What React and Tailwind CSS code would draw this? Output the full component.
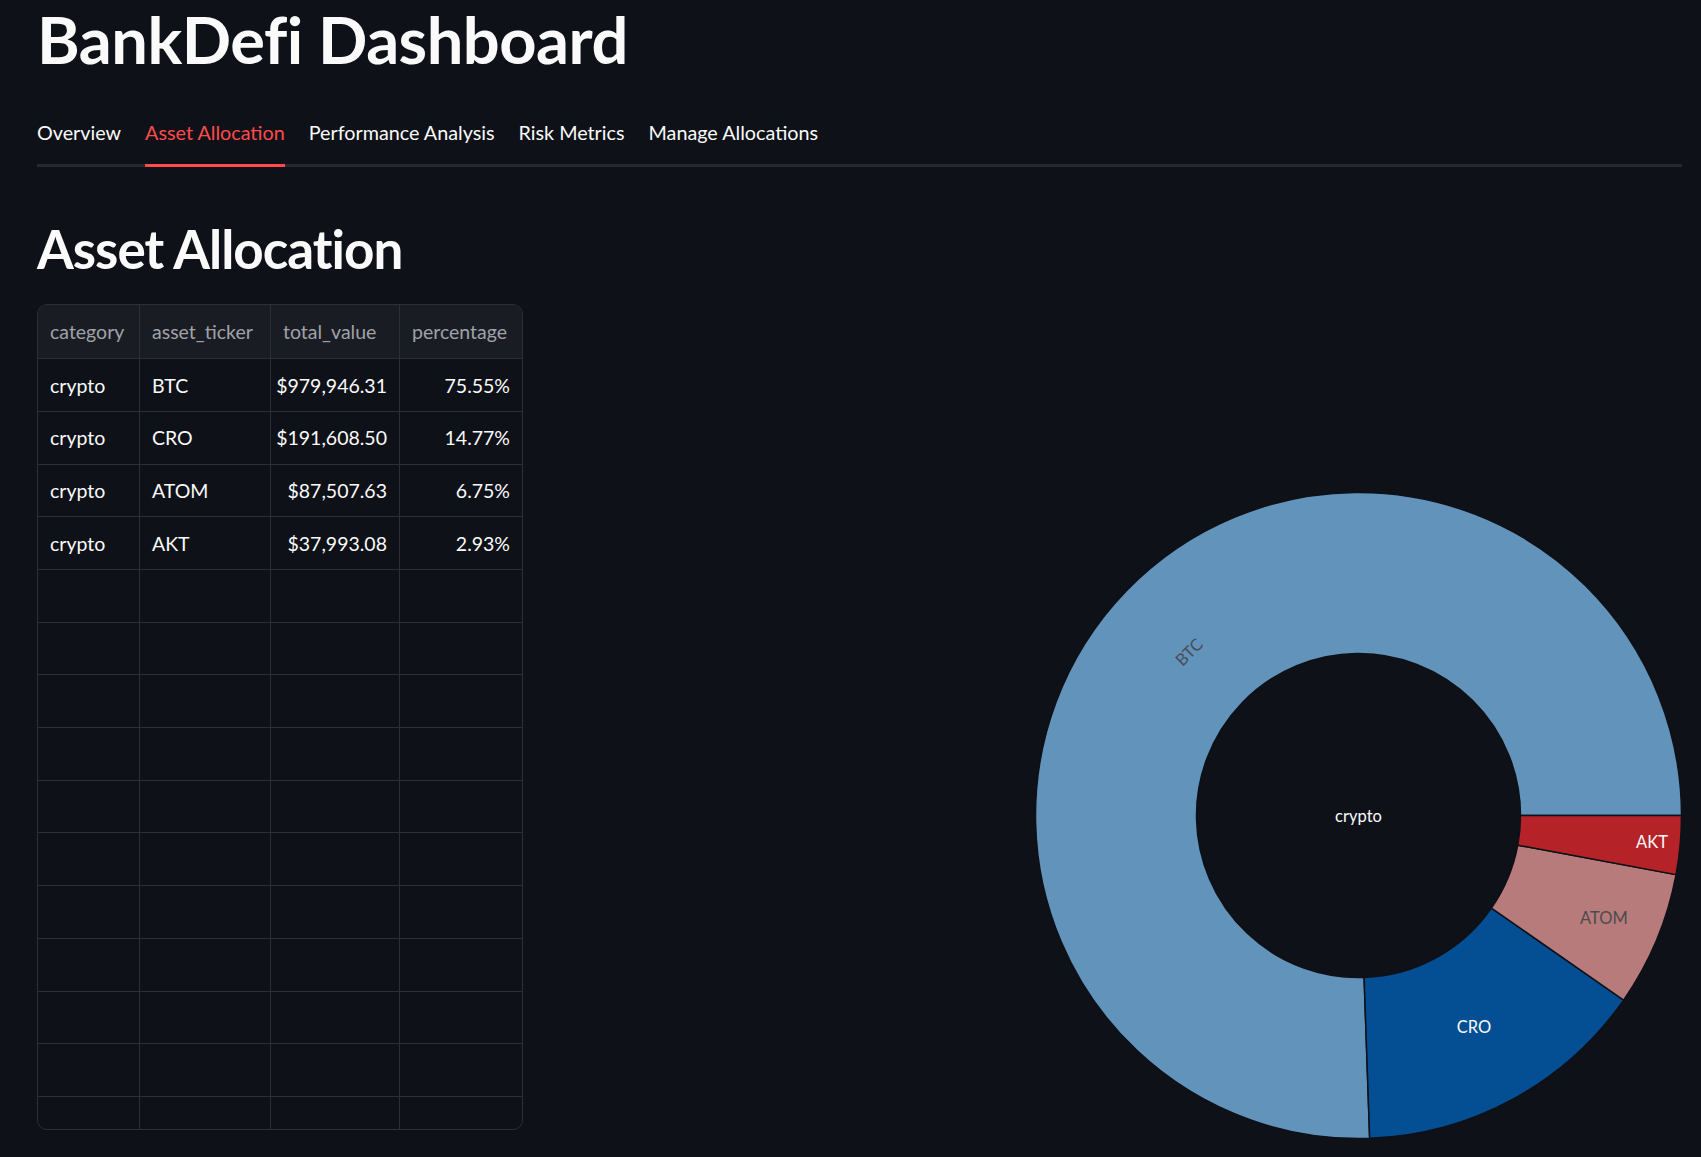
import React from "react";

const rows = [
  { category: "crypto", ticker: "BTC", value: "$979,946.31", pct: "75.55%" },
  { category: "crypto", ticker: "CRO", value: "$191,608.50", pct: "14.77%" },
  { category: "crypto", ticker: "ATOM", value: "$87,507.63", pct: "6.75%" },
  { category: "crypto", ticker: "AKT", value: "$37,993.08", pct: "2.93%" },
];

const tabs = ["Overview", "Asset Allocation", "Performance Analysis", "Risk Metrics", "Manage Allocations"];

const slices = [
  { label: "BTC", pct: 75.55, color: "#6193bb", text: "#474c52", lx: 154, ly: 160, rot: -45 },
  { label: "CRO", pct: 14.77, color: "#044f93", text: "#fafafa", lx: 439, ly: 535 },
  { label: "ATOM", pct: 6.75, color: "#b77b7c", text: "#4b4b4e", lx: 569, ly: 426 },
  { label: "AKT", pct: 2.93, color: "#b52227", text: "#fafafa", lx: 617, ly: 350 },
];

const C = 323.5;
const R = 323;
const r = 162;

function pt(angle, rad) {
  const a = (angle * Math.PI) / 180;
  return [C + rad * Math.cos(a), C - rad * Math.sin(a)];
}

function arc(a0, a1) {
  const large = a1 - a0 > 180 ? 1 : 0;
  const [x0, y0] = pt(a0, R);
  const [x1, y1] = pt(a1, R);
  const [x2, y2] = pt(a1, r);
  const [x3, y3] = pt(a0, r);
  return `M${x0} ${y0} A${R} ${R} 0 ${large} 0 ${x1} ${y1} L${x2} ${y2} A${r} ${r} 0 ${large} 1 ${x3} ${y3} Z`;
}

function Donut() {
  let start = 0;
  const parts = slices.map((s) => {
    const end = start + (s.pct / 100) * 360;
    const d = arc(start, end);
    start = end;
    return { ...s, d };
  });
  return (
    <svg width="647" height="647" viewBox="0 0 647 647" className="shrink-0">
      {parts.map((p) => (
        <path key={p.label} d={p.d} fill={p.color} stroke="#0e1117" strokeWidth="1.5" />
      ))}
      <circle cx={C} cy={C} r={r - 0.5} fill="#0e1117" />
      <text x={C} y={C} fill="#fafafa" fontSize="16.5" textAnchor="middle" dominantBaseline="central">
        crypto
      </text>
      {parts.map((p) => (
        <text
          key={p.label + "t"}
          x={p.lx}
          y={p.ly}
          fill={p.text}
          fontSize="16.5"
          textAnchor="middle"
          dominantBaseline="central"
          transform={p.rot ? `rotate(${p.rot} ${p.lx} ${p.ly})` : undefined}
        >
          {p.label}
        </text>
      ))}
    </svg>
  );
}

function DataTable() {
  const empty = Array.from({ length: 11 });
  const cols = "grid grid-cols-[102px_131px_129px_122px]";
  return (
    <div className="w-[486px] h-[826px] shrink-0 overflow-hidden rounded-[10px] border border-[#2d2f36]">
      <div className={`${cols} h-[54px] border-b border-[#2d2f36] bg-[#1a1c24] text-[#a0a2a8]`}>
        <div className="flex items-center border-r border-[#2d2f36] pl-3">category</div>
        <div className="flex items-center border-r border-[#2d2f36] pl-3">asset_ticker</div>
        <div className="flex items-center border-r border-[#2d2f36] pl-3">total_value</div>
        <div className="flex items-center pl-3">percentage</div>
      </div>
      {rows.map((row) => (
        <div key={row.ticker} className={`${cols} h-[52.7px] border-b border-[#2d2f36]`}>
          <div className="flex items-center border-r border-[#2d2f36] pl-3">{row.category}</div>
          <div className="flex items-center border-r border-[#2d2f36] pl-3">{row.ticker}</div>
          <div className="flex items-center justify-end border-r border-[#2d2f36] pr-3">{row.value}</div>
          <div className="flex items-center justify-end pr-3">{row.pct}</div>
        </div>
      ))}
      {empty.map((_, i) => (
        <div key={i} className={`${cols} h-[52.7px] border-b border-[#2d2f36]`}>
          <div className="border-r border-[#2d2f36]" />
          <div className="border-r border-[#2d2f36]" />
          <div className="border-r border-[#2d2f36]" />
          <div />
        </div>
      ))}
    </div>
  );
}

export default function App() {
  return (
    <div className="min-h-screen bg-[#0e1117] text-[#fafafa] [font-family:Lato,sans-serif] pl-[37px] pr-[19px]">
      <h1 className="text-[65px] font-bold leading-[1.2] tracking-[-0.5px]">BankDefi Dashboard</h1>

      <div className="mt-[43px] flex gap-6 border-b-[3px] border-[#26282e] text-[19.75px] leading-[1.2]">
        {tabs.map((t) => (
          <div
            key={t}
            className={
              t === "Asset Allocation"
                ? "-mb-[3px] border-b-[3px] border-[#ff4b4b] pb-[19px] text-[#ff4b4b]"
                : "-mb-[3px] border-b-[3px] border-transparent pb-[19px]"
            }
          >
            {t}
          </div>
        ))}
      </div>

      <h2 className="mt-[50px] text-[53px] font-bold leading-[1.2] tracking-[-1px]">Asset Allocation</h2>

      <div className="mt-6 flex text-[19.5px]">
        <DataTable />
        <div className="flex flex-1 justify-end pt-[188px]">
          <Donut />
        </div>
      </div>
    </div>
  );
}
